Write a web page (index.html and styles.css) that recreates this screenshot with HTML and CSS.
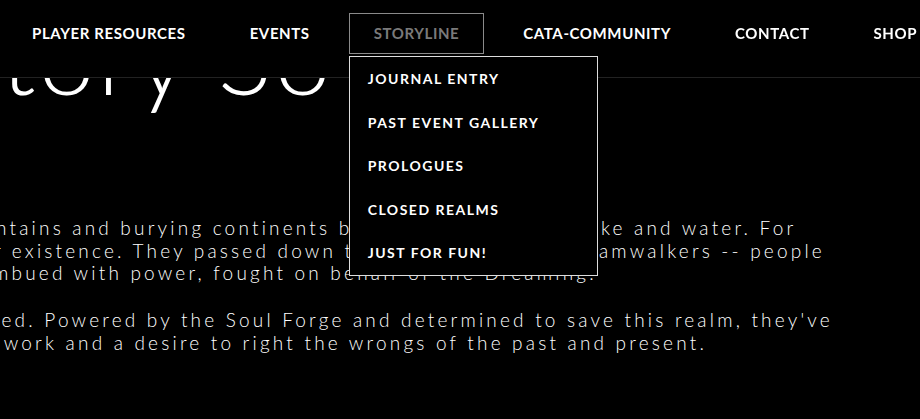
FILE: index.html
```html
<!DOCTYPE html>
<html lang="en">
<head>
    <meta charset="UTF-8">
    <meta name="viewport" content="width=device-width, initial-scale=1.0">
    <title>The Story So Far</title>
    <link rel="stylesheet" href="styles.css">
</head>
<body>

    <header class="site-header">
        <nav>
            <ul class="menu">
                <li><a href="#">Player Resources</a></li>
                <li><a href="#">Events</a></li>
                <li class="open">
                    <a href="#" class="current">Storyline</a>
                    <ul class="submenu">
                        <li><a href="#">Journal Entry</a></li>
                        <li><a href="#">Past Event Gallery</a></li>
                        <li><a href="#">Prologues</a></li>
                        <li><a href="#">Closed Realms</a></li>
                        <li><a href="#">Just For Fun!</a></li>
                    </ul>
                </li>
                <li><a href="#">Cata-Community</a></li>
                <li><a href="#">Contact</a></li>
                <li><a href="#">Shop</a></li>
            </ul>
        </nav>
    </header>

    <main class="page">
        <h1 class="page-title">The Story So Far</h1>

        <div class="story">
            <p>mountains and burying continents beneath a cloud of smoke and water. For<br>
            their existence. They passed down their power to the Dreamwalkers -- people<br>
            all imbued with power, fought on behalf of the Dreaming.</p>

            <p>formed. Powered by the Soul Forge and determined to save this realm, they've<br>
            teamwork and a desire to right the wrongs of the past and present.</p>
        </div>
    </main>

</body>
</html>
```

FILE: styles.css
```css
html, body {
    margin: 0;
    padding: 0;
    background-color: #000;
    overflow: hidden;
}
body {
    font-family: Lato, "Open Sans", sans-serif;
    color: #fff;
}

/* barra de navegacion fija */
.site-header {
    position: fixed;
    top: 0;
    left: 0;
    right: 0;
    height: 77px;
    background-color: #000;
    border-bottom: 1px solid #222;
    z-index: 10;
}
.menu {
    list-style: none;
    display: flex;
    margin: 0;
    padding: 13px 0 0;
    white-space: nowrap;
}
.menu > li {
    position: relative;
    margin: 0 7px;
}
.menu > li > a {
    display: block;
    padding: 0 24px;
    line-height: 39px;
    border: 1px solid transparent;
    color: #fff;
    text-decoration: none;
    text-transform: uppercase;
    font-weight: 700;
    font-size: 15px;
    letter-spacing: 0.6px;
}
.menu > li > a.current {
    color: #7a7a7a;
    border-color: #8a8a8a;
}

.submenu {
    list-style: none;
    position: absolute;
    top: calc(100% + 2px);
    left: 0;
    width: 247px;
    margin: 0;
    padding: 0;
    background-color: #000;
    border: 1px solid #ddd;
}
.submenu a {
    display: block;
    padding: 0 18px;
    line-height: 43.5px;
    color: #fff;
    text-decoration: none;
    text-transform: uppercase;
    font-weight: 700;
    font-size: 14px;
    letter-spacing: 1.5px;
}

/* contenido */
.page-title {
    margin: 6px 0 0 -259px;
    font-size: 101px;
    font-weight: 300;
    line-height: 1;
    color: #fff;
    white-space: nowrap;
    letter-spacing: 3px;
}
.story {
    margin: 110px 0 0 -50px;
}
.story p {
    margin: 0 0 24.5px;
    font-size: 19px;
    font-weight: 300;
    line-height: 22.5px;
    letter-spacing: 3.2px;
    white-space: nowrap;
}
```
